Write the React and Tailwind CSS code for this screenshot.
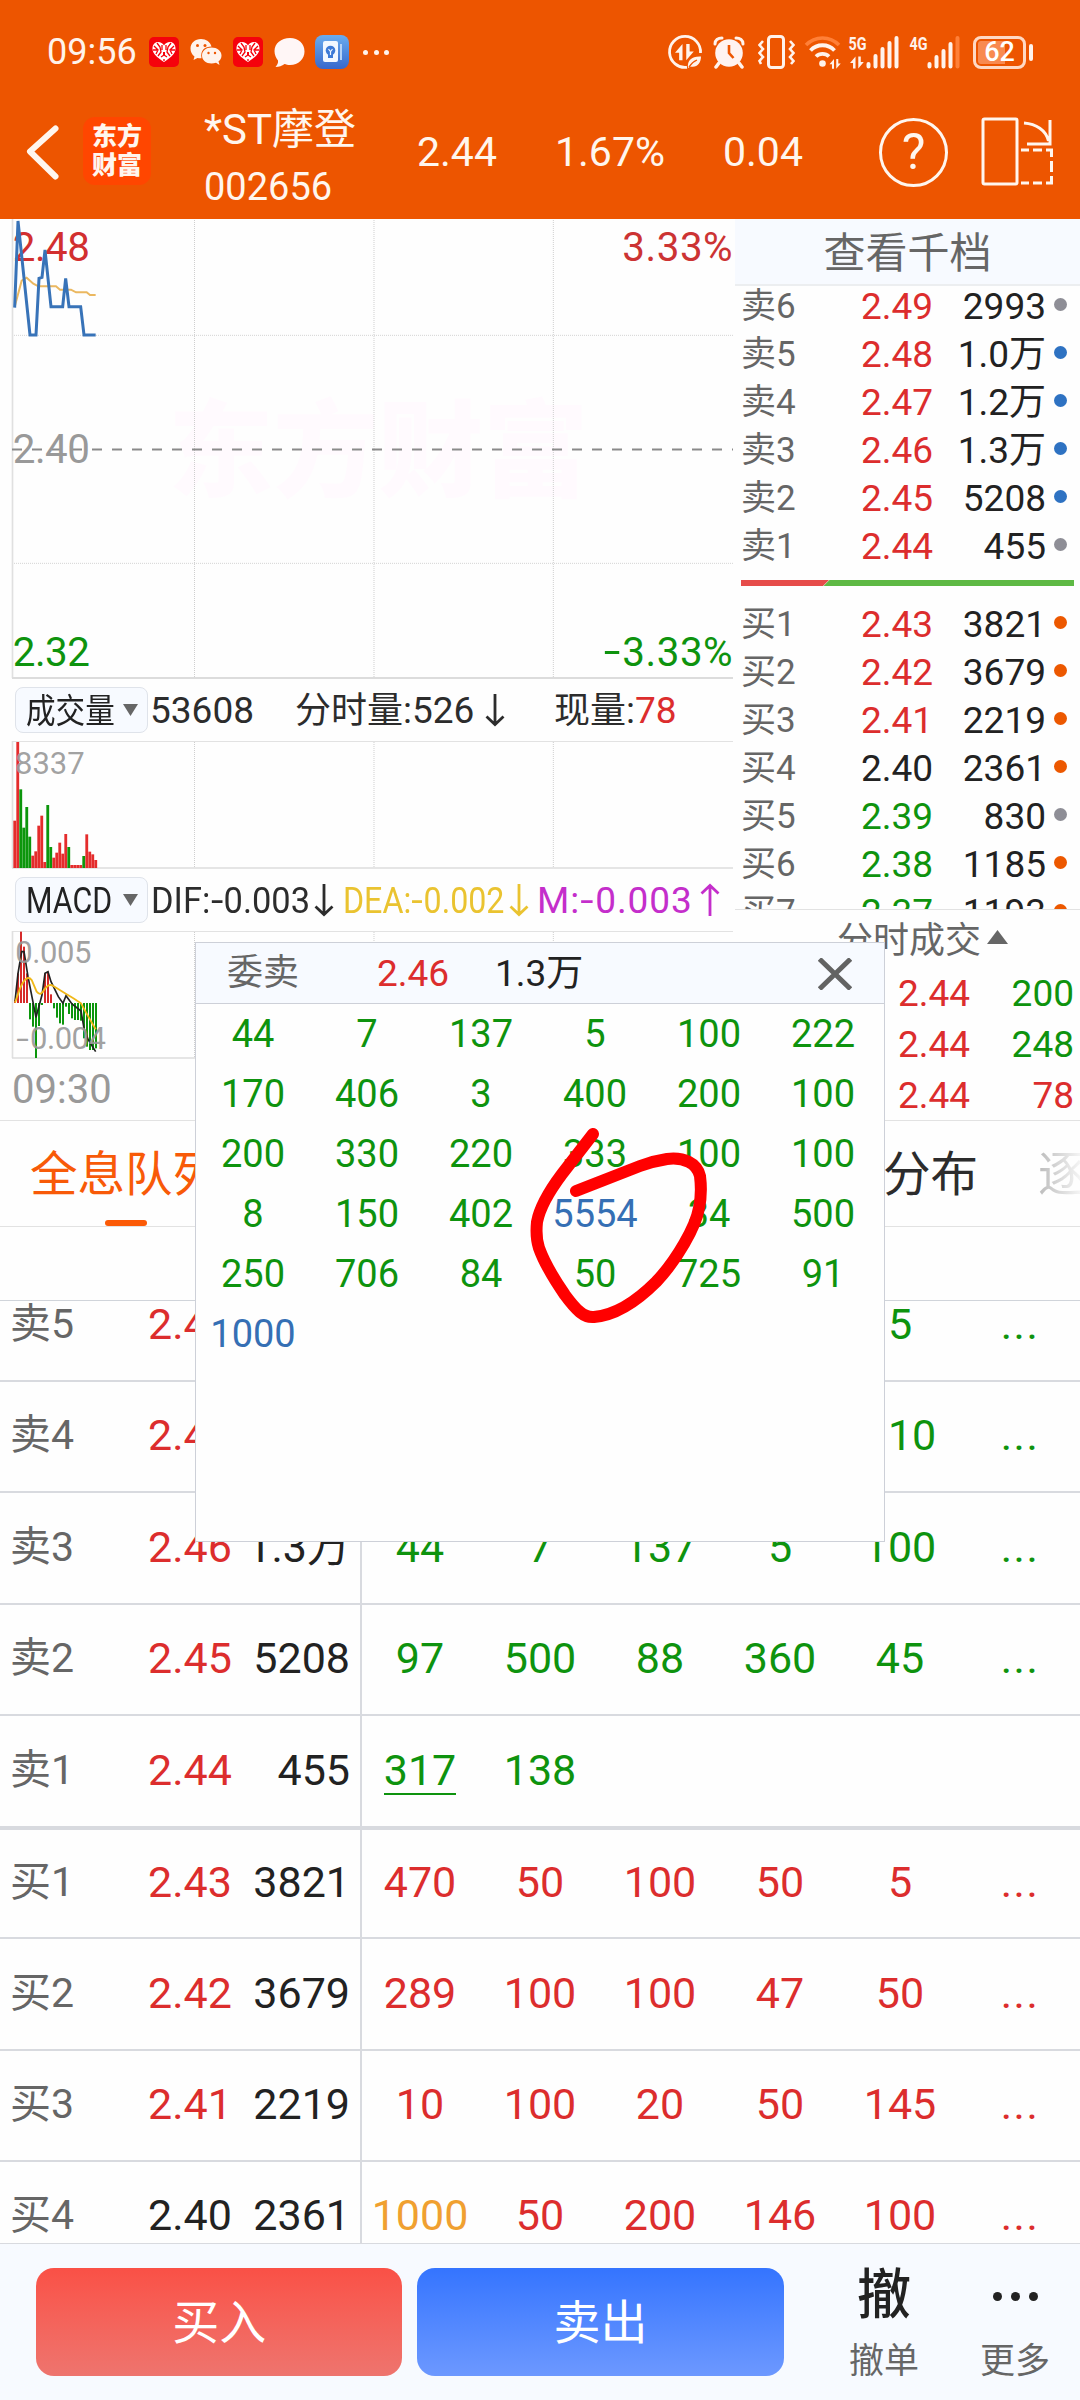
import React from "react";

const RED = "text-[#dc2d2d]";
const GREEN = "text-[#0e930e]";
const BLACK = "text-[#222222]";
const BLUE = "text-[#356fb4]";
const ORANGE = "text-[#f0a030]";

const DOTS = { g: "bg-[#8e8e96]", b: "bg-[#2e72c2]", o: "bg-[#ec5800]" };

const asks = [
  ["卖6", "2.49", "2993", "g"],
  ["卖5", "2.48", "1.0万", "b"],
  ["卖4", "2.47", "1.2万", "b"],
  ["卖3", "2.46", "1.3万", "b"],
  ["卖2", "2.45", "5208", "b"],
  ["卖1", "2.44", "455", "g"],
];

const bids = [
  ["买1", "2.43", "3821", "o", RED],
  ["买2", "2.42", "3679", "o", RED],
  ["买3", "2.41", "2219", "o", RED],
  ["买4", "2.40", "2361", "o", BLACK],
  ["买5", "2.39", "830", "g", GREEN],
  ["买6", "2.38", "1185", "o", GREEN],
  ["买7", "2.37", "1193", "o", GREEN],
];

const queue = [
  ["44", "7", "137", "5", "100", "222"],
  ["170", "406", "3", "400", "200", "100"],
  ["200", "330", "220", "333", "100", "100"],
  ["8", "150", "402", "5554", "34", "500"],
  ["250", "706", "84", "50", "725", "91"],
  ["1000"],
];

const volume = [
  [422, 1], [186, 1], [328, 0], [443, 0], [381, 0], [470, 0], [527, 1], [514, 1], [437, 1], [407, 1],
  [546, 1], [375, 0], [501, 0], [533, 1], [518, 1], [488, 1], [521, 1], [462, 1], [501, 0], [555, 1],
  [555, 1], [555, 1], [555, 1], [528, 0], [463, 1], [515, 1], [523, 1], [540, 1],
];

const macd = [
  960, 880, 755, 800, 880, 1018, 1040, 1134, 1038, 975, 880, 875, 943, 985, 1013, 1030, 1034, 980, 1002,
  1015, 1020, 1020, 1022, 1075, 1100, 1110, 1110, 1105,
];

function HeartApp() {
  return (
    <svg width="30" height="30" viewBox="0 0 30 30" className="shrink-0">
      <rect width="30" height="30" rx="5" fill="#f5020c" />
      <path d="M15 25C10 21.500 3.500 17.500 3.500 11.500C3.500 7.500 6 5 9 5C11.500 5 14 6.500 15 8.500C16 6.500 18.500 5 21 5C24 5 26.500 7.500 26.500 11.500C26.500 17.500 20 21.500 15 25Z" fill="#fff" />
      <path d="M5 9L9 13L7 17M8 6L11 10L12 15L9 19M13 8V13M17 8V13M25 9L21 13L23 17M22 6L19 10L18 15L21 19M4 13H8M22 13H26M12 20L15 18L18 20M15 22V24" stroke="#f5020c" strokeWidth="1.300" fill="none" />
      <rect x="14" y="15" width="2" height="3" fill="#f5020c" />
    </svg>
  );
}

function DataArrows({ x, y, s }) {
  return (
    <g transform={`translate(${x} ${y}) scale(${s})`} fill="#fff3ec">
      <path d="M0 7L6 0V13H3.300V7Z" />
      <path d="M9 0H11.700V6H15L9 13Z" />
    </g>
  );
}

function NetLabel({ children }) {
  return (
    <text x="-.5" y="15" fontFamily="Roboto" fontWeight="700" fontSize="18.500" textLength="18" lengthAdjust="spacingAndGlyphs" fill="#fff3ec">
      {children}
    </text>
  );
}

function StatusBar() {
  return (
    <div className="flex h-[104px] items-center pl-[47px] text-[#fff3ea]">
      <div className="w-[102px] whitespace-nowrap text-[36px] leading-[44px]">09:56</div>
      <HeartApp />
      <svg width="32" height="28" viewBox="0 0 32 28" className="ml-[11px] shrink-0">
        <path d="M11 1C5 1 .5 5 .5 10.500C.5 14 2 16.500 4.500 18.500L3.500 22L7.500 20C9 20.300 10 20.400 11.500 20.300C10 12 15 8.500 21.500 8.500C20.500 4 16 1 11 1Z" fill="#fff3ec" />
        <path d="M21.500 9.500C16 9.500 12 13 12 17.500C12 22 16 25.500 21.500 25.500C23 25.500 24.500 25.200 26 24.700L29.500 27L28.500 23.300C30.500 22 31.500 20 31.500 17.500C31.500 13 27 9.500 21.500 9.500Z" fill="#fff3ec" />
        <g fill="#ed5500">
          <circle cx="7.500" cy="7.500" r="1.500" /><circle cx="15" cy="7.500" r="1.500" />
          <circle cx="18.500" cy="15" r="1.200" /><circle cx="25" cy="15" r="1.200" />
        </g>
      </svg>
      <div className="ml-[11px] flex"><HeartApp /></div>
      <svg width="31" height="31" viewBox="0 0 31 31" className="ml-[11px] shrink-0">
        <path d="M16 1C7 1 .5 6.500 .5 14C.5 18 2 21 4 23.500C4.500 26 3 28 1.500 30C5 30 8 29 10.500 27C12 27.500 14 28 16 28C24.500 28 30.500 22 30.500 14.500C30.500 6.500 24.500 1 16 1Z" fill="#fff6f6" />
      </svg>
      <svg width="34" height="34" viewBox="0 0 34 34" className="ml-[10px] shrink-0">
        <defs>
          <linearGradient id="noteBg" x1="0" y1="0" x2="0" y2="1">
            <stop offset="0" stopColor="#6aacee" /><stop offset="1" stopColor="#3768cc" />
          </linearGradient>
        </defs>
        <rect width="34" height="34" rx="8" fill="url(#noteBg)" />
        <rect x="8" y="6" width="15" height="21" rx="2" fill="#f2f8ff" />
        <rect x="25" y="9" width="2" height="16" fill="#b4d2f6" />
        <circle cx="15.500" cy="15.500" r="4.800" fill="#3d7ad6" />
        <rect x="13" y="19" width="5" height="4" fill="#3d7ad6" />
        <path d="M13.500 14L15.500 16.500L17.500 14M15.500 16V20" stroke="#f2f8ff" strokeWidth="1.200" fill="none" />
      </svg>
      <div className="ml-[14px] flex w-[26px] shrink-0 justify-between">
        <i className="h-[5px] w-[5px] rounded-full bg-[#fff3ec]" />
        <i className="h-[5px] w-[5px] rounded-full bg-[#fff3ec]" />
        <i className="h-[5px] w-[5px] rounded-full bg-[#fff3ec]" />
      </div>
      <svg width="36" height="36" viewBox="0 0 36 36" className="ml-[278px] shrink-0">
        <path d="M33.500 19A15.500 15.500 0 1 0 20 33.300" fill="none" stroke="#fff3ec" strokeWidth="2.800" />
        <DataArrows x="8" y="10" s="1.250" />
        <path d="M21 34C20 26 25 22 34 22.500C34 29 30 34 23.500 32.500Z" fill="#fff3ec" />
        <path d="M22 33C24 29.500 26.500 27.500 30 26" stroke="#ed5500" strokeWidth="1.200" fill="none" />
      </svg>
      <svg width="32" height="33" viewBox="0 0 32 33" className="ml-[10px] shrink-0">
        <circle cx="16" cy="17" r="13.800" fill="#fff3f0" />
        <path d="M2 8C2 4 5 2 9 2M30 8C30 4 27 2 23 2" stroke="#fff3ec" strokeWidth="3" fill="none" strokeLinecap="round" />
        <path d="M6 27L3 31M26 27L29 31" stroke="#fff3ec" strokeWidth="3.500" strokeLinecap="round" />
        <path d="M16 9V17L20.500 22" stroke="#ed5500" strokeWidth="2.600" fill="none" />
      </svg>
      <svg width="38" height="34" viewBox="0 0 38 34" className="ml-[12px] shrink-0">
        <rect x="11.500" y="1.500" width="15" height="31" rx="3" fill="none" stroke="#fff3ec" strokeWidth="3" />
        <path d="M6 6L2.500 10L6 14L2.500 18L6 22L2.500 26L4 29M33 6L36.500 10L33 14L36.500 18L33 22L36.500 26L34 29" fill="none" stroke="#fff3ec" strokeWidth="2.600" />
      </svg>
      <svg width="38" height="34" viewBox="0 0 38 34" className="ml-[9px] shrink-0">
        <path d="M2 10C11 .5 26 .5 35 10" fill="none" stroke="#ff8038" strokeWidth="3.500" />
        <path d="M6.500 15.500C13 8.500 24 8.500 30.500 15.500" fill="none" stroke="#fff3ec" strokeWidth="3.800" />
        <path d="M12 21.500C15.500 18 21.500 18 25 21.500" fill="none" stroke="#fff3ec" strokeWidth="3.800" />
        <circle cx="18.500" cy="28.500" r="3.300" fill="#fff3ec" />
        <DataArrows x="25.500" y="24" s=".75" />
      </svg>
      <svg width="52" height="34" viewBox="0 0 52 34" className="ml-[7px] shrink-0 overflow-visible">
        <NetLabel>5G</NetLabel>
        <DataArrows x="1" y="21.500" s=".92" />
        <path d="M19.500 29V31.500M26.500 21V31.500M33.500 14V31.500M40.500 8V31.500M47.500 3V31.500" stroke="#fff3ec" strokeWidth="4" strokeLinecap="round" />
      </svg>
      <svg width="52" height="34" viewBox="0 0 52 34" className="ml-[9px] shrink-0 overflow-visible">
        <NetLabel>4G</NetLabel>
        <path d="M19.500 29V31.500M26.500 22V31.500M33.500 16V31.500M40.500 9V31.500" stroke="#fff3ec" strokeWidth="4" strokeLinecap="round" />
        <path d="M47.500 3V31.500" stroke="#ff8038" strokeWidth="4" strokeLinecap="round" />
      </svg>
      <div className="ml-[11px] flex h-[33px] w-[53px] shrink-0 items-center justify-center rounded-[8px] border-[3px] border-[#ffd9c4] bg-[#ed5500] p-[2px]">
        <div className="flex h-full w-full items-center justify-center rounded-[3px] bg-[linear-gradient(90deg,#f88a50_62%,#ed5500_62%)] text-[27px] font-medium leading-[33px] text-white">62</div>
      </div>
      <div className="ml-[3px] h-[17px] w-[4px] rounded-[2px] bg-[#fff3ec]" />
    </div>
  );
}

function TitleBar() {
  return (
    <div className="flex h-[115px] text-[#fff6ee]">
      <svg width="83" height="95" viewBox="0 0 83 95" className="shrink-0">
        <path d="M55.500 24.500L30 47.500L55.500 72.500" fill="none" stroke="#fff6ee" strokeWidth="6" strokeLinecap="round" strokeLinejoin="round" />
      </svg>
      <div className="mt-[13px] flex h-[68px] w-[68px] shrink-0 flex-col items-center justify-center rounded-[12px] bg-[#ff4600] text-[25px] font-black leading-[29px]">
        <span>东方</span>
        <span>财富</span>
      </div>
      <div className="ml-[53px] w-[213px] shrink-0 whitespace-nowrap">
        <div className="mt-[2px] h-[48px] text-[42px] leading-[48px]">*ST摩登</div>
        <div className="mt-[9px] text-[38px] leading-[48px]">002656</div>
      </div>
      <div className="flex h-[96px] items-center text-[41px] leading-none">
        <div className="w-[138px]">2.44</div>
        <div className="w-[168px]">1.67%</div>
        <div className="w-[156px]">0.04</div>
        <div className="flex h-[69px] w-[69px] items-center justify-center rounded-full border-[3px] border-[#fff6ee] text-[50px]">?</div>
        <svg width="74" height="70" viewBox="0 0 74 70" className="ml-[33px]">
          <g fill="none" stroke="#fff6ee" strokeWidth="3">
            <rect x="2" y="2" width="34" height="65" rx="1.500" />
            <path d="M43 6C55 7 65 13 67.500 24M69 3V27H46" />
            <path d="M40 33H48M52 33H61M65 33H70.500V40M70.500 44V55M70.500 59V66H65M61 66H52M48 66H40" />
          </g>
        </svg>
      </div>
    </div>
  );
}

function Grid({ top, bottom }) {
  return (
    <g stroke="#cfcfcf" strokeWidth="3" strokeDasharray="3 3">
      <path d={`M583.500 ${top}V${bottom}`} />
      <path d={`M1122 ${top}V${bottom}`} />
      <path d={`M1660 ${top}V${bottom}`} />
    </g>
  );
}

function PriceChart() {
  return (
    <svg width="734" height="460" viewBox="0 12 2202 1380" className="block" fontFamily="Roboto">
      <text x="505" y="820" fontFamily="Noto Sans CJK SC" fontWeight="900" fontSize="315" fill="#fffafe">东方财富</text>
      <Grid top="15" bottom="1388" />
      <path d="M36 361H2199M36 1045H2199" stroke="#d4d4d4" strokeWidth="3" strokeDasharray="3 3" />
      <path d="M37.500 12V1389" stroke="#e0e0e0" strokeWidth="5" />
      <path d="M36 1389H2199" stroke="#dcdcdc" strokeWidth="6" />
      <path d="M36 703.500H2199" stroke="#8a8a8a" strokeWidth="6" strokeDasharray="30 30" />
      <g fontSize="121">
        <text x="38" y="138" fill="#d22f2f" textLength="232">2.48</text>
        <text x="38" y="745" fill="#999999" textLength="232">2.40</text>
        <text x="38" y="1354" fill="#0e930e" textLength="232">2.32</text>
        <text x="1867" y="138" textLength="331" fill="#cc3333">3.33%</text>
        <text x="1867" y="1354" textLength="331" fill="#0e930e">3.33%</text>
        <text x="1811" y="1350" fill="#0e930e" textLength="50" lengthAdjust="spacingAndGlyphs">-</text>
      </g>
      <path d="M44 275L65 197L80 188L100 206L115 214H168L180 224H213L228 232H260L270 240H287" fill="none" stroke="#ebb860" strokeWidth="6" />
      <path d="M44 278L54 18L90 360H108L117 190L126 187L135 105L153 275H188L197 190L207 275H242L252 360H287" fill="none" stroke="#3873b8" strokeWidth="9" />
    </svg>
  );
}

function VolumeChart() {
  return (
    <svg width="734" height="128" viewBox="0 183 2202 384" className="block">
      <Grid top="186" bottom="561" />
      <path d="M36 184.500H2199" stroke="#e2e2e2" strokeWidth="3" />
      <path d="M37.500 183V564" stroke="#e0e0e0" strokeWidth="5" />
      <path d="M36 564H2199" stroke="#dcdcdc" strokeWidth="5" />
      {volume.map(([top, up], i) => (
        <rect key={i} x={40 + i * 9} y={top} width="8.500" height={564 - top} fill={up ? "#e42c2c" : "#0c960c"} />
      ))}
      <text x="45" y="281" fontFamily="Roboto" fontSize="93" fill="#999999" fillOpacity=".92">8337</text>
    </svg>
  );
}

function MacdChart() {
  return (
    <svg width="734" height="128" viewBox="0 753 2202 384" className="block">
      <Grid top="756" bottom="1131" />
      <path d="M36 754.500H2199" stroke="#e2e2e2" strokeWidth="3" />
      <path d="M37.500 753V1134" stroke="#e0e0e0" strokeWidth="5" />
      <path d="M36 1134H2199" stroke="#dcdcdc" strokeWidth="5" />
      {macd.map((v, i) => (
        <rect key={i} x={42 + i * 9} y={Math.min(v, 969)} width="6" height={Math.abs(v - 969)} fill={v < 969 ? "#d62a2a" : "#0c960c"} />
      ))}
      <path d="M45 965L54 880L65 815H72L84 890L108 1012L126 945L135 880L144 875L153 905L175 950L189 970L198 947L216 972L243 993L252 1045L265 1080L287 1115" fill="none" stroke="#222" strokeWidth="5" />
      <path d="M45 968L60 925Q80 880 95 900L110 935Q122 950 132 930Q146 908 160 918L195 940L220 955L243 970L265 1010L287 1048" fill="none" stroke="#f0b818" strokeWidth="5.500" />
      <g fontFamily="Roboto" fontSize="93" fill="#999999" fillOpacity=".92">
        <text x="46" y="850" textLength="228">0.005</text>
        <text x="49" y="1107" textLength="38" lengthAdjust="spacingAndGlyphs">-</text>
        <text x="90" y="1107" textLength="228">0.004</text>
      </g>
    </svg>
  );
}

function Arrow({ up }) {
  return (
    <svg width="20" height="34" viewBox="0 0 20 34" fill="none" stroke="currentColor" strokeWidth="2.800" className="shrink-0">
      {up ? <path d="M10 33V3M1.500 10.500L10 2.500L18.500 10.500" /> : <path d="M10 1V31M1.500 23.500L10 31.500L18.500 23.500" />}
    </svg>
  );
}

function Picker({ children }) {
  return (
    <div className="flex h-[46px] w-[133px] shrink-0 items-center rounded-[8px] border border-[#dfe3ea] bg-[#f7faff] pl-[10px] text-[#222]">
      <div className="w-[97px] whitespace-nowrap">{children}</div>
      <svg width="15" height="12" viewBox="0 0 15 12"><path d="M0 0H15L7.500 12Z" fill="#666" /></svg>
    </div>
  );
}

function Dash() {
  return <span className="mx-[2px] inline-block scale-x-130">-</span>;
}

function ChartColumn() {
  return (
    <div className="w-[735px] shrink-0">
      <PriceChart />
      <div className="flex h-[62px] items-center pl-[15px] text-[37px] leading-none whitespace-nowrap text-[#2c2c2c]">
        <Picker><span className="inline-block origin-left scale-x-[.87] text-[34px]">成交量</span></Picker>
        <div className="ml-[2px] w-[145px]">53608</div>
        <div className="w-[190px]"><span className="text-[36px]">分时量</span>:526</div>
        <Arrow />
        <div className="ml-[49px]"><span className="text-[36px]">现量</span>:<span className={RED}>78</span></div>
      </div>
      <VolumeChart />
      <div className="flex h-[62px] items-center pl-[15px] text-[37px] leading-none whitespace-nowrap text-[#2c2c2c]">
        <Picker><span className="inline-block origin-left scale-x-[.82]">MACD</span></Picker>
        <div className="ml-[3px] w-[163px]"><span className="inline-block origin-left scale-x-[.93]">DIF:<Dash />0.003</span></div>
        <Arrow />
        <div className="ml-[9px] w-[166px] text-[#eac330]"><span className="inline-block origin-left scale-x-[.87]">DEA:<Dash />0.002</span></div>
        <div className="text-[#eac330]"><Arrow /></div>
        <div className="ml-[8px] w-[163px] tracking-[.9px] text-[#c42ecb]">M:<Dash />0.003</div>
        <div className="text-[#c42ecb]"><Arrow up /></div>
      </div>
      <MacdChart />
      <div className="flex h-[61px] items-center pl-[12px] text-[40px] leading-none text-[#999]">09:30</div>
    </div>
  );
}

function BookRow({ row, color }) {
  const [name, price, qty, dot] = row;
  return (
    <div className="flex h-[48px] shrink-0 items-center pt-px pl-[6px] text-[37px] leading-[47px] whitespace-nowrap">
      <div className="w-[120px] text-[35px] text-[#666]">{name}</div>
      <div className={`w-[74px] ${color}`}>{price}</div>
      <div className={`w-[111px] text-right ${BLACK}`}>{qty}</div>
      <i className={`relative -top-[2px] ml-[8px] h-[13px] w-[13px] rounded-full ${DOTS[dot]}`} />
    </div>
  );
}

function BookColumn() {
  return (
    <div className="flex w-[345px] flex-col">
      <div className="flex h-[67px] items-center justify-center border-b-2 border-[#eceef0] bg-[#f7faff] pt-[5px] text-[42px] leading-none text-[#666]">查看千档</div>
      <div className="-mt-[4px]">
        {asks.map((r) => <BookRow key={r[0]} row={r} color={RED} />)}
      </div>
      <svg width="333" height="6" viewBox="0 0 333 6" className="mt-[10px] ml-[6px] block shrink-0">
        <path d="M0 0H88L82 6H0Z" fill="#e64c4a" />
        <path d="M88.500 0H333V6H82.500Z" fill="#5eb944" />
      </svg>
      <div className="mt-[14px] h-[311px] overflow-hidden border-b border-[#e2e2e2]">
        {bids.map((r) => <BookRow key={r[0]} row={r} color={r[4]} />)}
      </div>
      <div className="flex h-[57px] items-center pt-[4px] pl-[102px] text-[36px] leading-none text-[#666]">
        分时成交
        <svg width="21" height="14" viewBox="0 0 21 14" className="ml-[6px] -mt-[8px]"><path d="M10.500 0L21 14H0Z" fill="#666" /></svg>
      </div>
      {[["200", GREEN], ["248", GREEN], ["78", RED]].map(([q, c]) => (
        <div key={q} className="flex h-[51px] shrink-0 items-center justify-between pt-[2px] pr-[6px] pl-[163px] text-[37px] leading-none">
          <span className={RED}>2.44</span>
          <span className={c}>{q}</span>
        </div>
      ))}
    </div>
  );
}

function Tabs() {
  return (
    <div className="flex h-[107px] shrink-0 border-y border-[#e2e2e2] text-[47.500px] leading-none whitespace-nowrap">
      <div className="flex w-[190px] flex-col pl-[30px] text-[#f85a08]">
        <div className="flex h-[99px] items-center pt-[10px]">全息队列</div>
        <i className="ml-[75px] h-[6px] w-[42px] rounded-full bg-[#fb5a06]" />
      </div>
      <div className="ml-auto flex h-[99px] w-[197px] items-center justify-between pt-[10px] text-[#2c2c2c]">
        <span>分布</span>
        <span className="w-[42px] bg-[linear-gradient(90deg,#bbbbbb,#f4f4f4)] bg-clip-text text-transparent">逐</span>
      </div>
    </div>
  );
}

function QueueRow({ name, price, qty, cells, color, priceColor = RED, className, firstColor, mark }) {
  return (
    <div className={`flex shrink-0 overflow-hidden border-[#d8dadf] text-[43px] leading-[56px] whitespace-nowrap ${className}`}>
      <div className="flex w-[362px] shrink-0 items-center border-r-2 border-[#d8dadf] pb-[3px] pl-[10px]">
        <div className="w-[138px] text-[41px] text-[#666]">{name}</div>
        <div className={`w-[84px] ${priceColor}`}>{price}</div>
        <div className={`w-[118px] text-right ${BLACK}`}>{qty}</div>
      </div>
      <div className={`-ml-[2px] grid flex-1 grid-cols-6 items-center pb-[3px] text-center ${color}`}>
        {cells.map((c, i) => (
          <span key={i} className={`${i === 0 && firstColor ? firstColor : ""} ${c === "..." ? "tracking-[1.500px]" : ""}`}>
            {i === 0 && mark ? <span className="relative">{c}<i className="absolute bottom-0 left-0 h-[2px] w-full bg-[#0e930e]" /></span> : c}
          </span>
        ))}
      </div>
    </div>
  );
}

function QueueTable() {
  return (
    <div className="flex h-[1017px] shrink-0 flex-col overflow-hidden border-b border-[#d8dadf]">
      <div className="h-[74px] shrink-0 border-b border-[#d0d4da]" />
      <div className="flex h-[81px] shrink-0 flex-col justify-end overflow-hidden">
        <QueueRow name="卖5" price="2.48" qty="1.0万" cells={["100", "20", "50", "10", "5", "..."]} color={GREEN} className="h-[111px] border-b-2" />
      </div>
      <QueueRow name="卖4" price="2.47" qty="1.2万" cells={["60", "30", "100", "20", "110", "..."]} color={GREEN} className="h-[111px] border-b-2" />
      <QueueRow name="卖3" price="2.46" qty="1.3万" cells={["44", "7", "137", "5", "100", "..."]} color={GREEN} className="h-[112px] border-b-2" />
      <QueueRow name="卖2" price="2.45" qty="5208" cells={["97", "500", "88", "360", "45", "..."]} color={GREEN} className="h-[111px] border-b-2" />
      <QueueRow name="卖1" price="2.44" qty="455" cells={["317", "138"]} color={GREEN} mark className="h-[114px] border-b-4" />
      <QueueRow name="买1" price="2.43" qty="3821" cells={["470", "50", "100", "50", "5", "..."]} color={RED} className="h-[109px] border-b-2" />
      <QueueRow name="买2" price="2.42" qty="3679" cells={["289", "100", "100", "47", "50", "..."]} color={RED} className="h-[112px] border-b-2" />
      <QueueRow name="买3" price="2.41" qty="2219" cells={["10", "100", "20", "50", "145", "..."]} color={RED} className="h-[111px] border-b-2" />
      <QueueRow name="买4" price="2.40" qty="2361" priceColor={BLACK} cells={["1000", "50", "200", "146", "100", "..."]} firstColor={ORANGE} color={RED} className="h-[109px]" />
    </div>
  );
}

function QueuePopup() {
  return (
    <div className="absolute top-[942px] left-[195px] h-[600px] w-[690px] border border-[#cdd0d8] bg-[#fefefe]">
      <div className="flex h-[61px] items-center border-b border-[#cdd0d8] bg-[#f7faff] pt-px pl-[31px] text-[37px] leading-[47px] whitespace-nowrap">
        <div className="w-[150px] text-[36px] text-[#666]">委卖</div>
        <div className={`w-[118px] ${RED}`}>2.46</div>
        <div className={`w-[323px] ${BLACK}`}>1.3万</div>
        <svg width="34" height="32" viewBox="0 0 34 32"><path d="M1.500 1L32.500 31M32.500 1L1.500 31" stroke="#636363" strokeWidth="5" /></svg>
      </div>
      <div className={`grid w-[684px] grid-cols-6 text-center text-[38px] leading-[60px] ${GREEN}`}>
        {queue.flat().map((n, i) => (
          <span key={i} className={n.length > 3 ? BLUE : ""}>{n}</span>
        ))}
      </div>
    </div>
  );
}

function Footer() {
  return (
    <div className="flex h-[156px] shrink-0 items-start bg-[#f7faff] pt-[24px] pl-[36px] leading-none">
      <div className="flex h-[108px] w-[367px] items-center justify-center rounded-[18px] bg-linear-to-b from-[#fa5046] to-[#ee746e] text-[47px] text-white">买入</div>
      <div className="ml-[15px] flex h-[108px] w-[367px] items-center justify-center rounded-[18px] bg-linear-to-b from-[#3474ff] to-[#6c98ff] text-[47px] text-white">卖出</div>
      <div className="flex w-[201px] flex-col items-center">
        <div className="flex h-[56px] items-center text-[54px] font-medium leading-[64px] text-[#222]">撤</div>
        <div className="mt-[20px] text-[35px] text-[#666]">撤单</div>
      </div>
      <div className="-ml-[34px] flex w-[130px] flex-col items-center">
        <div className="flex h-[56px] items-center gap-[9px]">
          <i className="h-[9px] w-[9px] rounded-full bg-[#222]" />
          <i className="h-[9px] w-[9px] rounded-full bg-[#222]" />
          <i className="h-[9px] w-[9px] rounded-full bg-[#222]" />
        </div>
        <div className="mt-[20px] text-[35px] text-[#666]">更多</div>
      </div>
    </div>
  );
}

export default function App() {
  return (
    <div className="relative flex h-[2400px] w-[1080px] flex-col overflow-hidden bg-[#fefefe] font-['Roboto','Noto_Sans_CJK_SC',sans-serif]">
      <div className="h-[219px] shrink-0 bg-[#ed5500]">
        <StatusBar />
        <TitleBar />
      </div>
      <div className="flex h-[901px] shrink-0">
        <ChartColumn />
        <BookColumn />
      </div>
      <Tabs />
      <QueueTable />
      <Footer />
      <QueuePopup />
      <svg className="absolute top-[1120px] left-[525px]" width="190" height="210" viewBox="525 1120 190 210">
        <path d="M593 1134L562 1174C550 1190 540 1206 537 1222C536 1232 537 1242 539 1248C544 1262 554 1279 565 1295C576 1310 584 1318 594 1317C618 1315 638 1300 656 1282C677 1260 696 1226 699 1208C702 1194 701 1184 700 1176C697 1163 684 1157 667 1159C654 1161 648 1163 640 1166L576 1191" fill="none" stroke="#ff0000" strokeWidth="12" strokeLinecap="round" strokeLinejoin="round" />
      </svg>
    </div>
  );
}
